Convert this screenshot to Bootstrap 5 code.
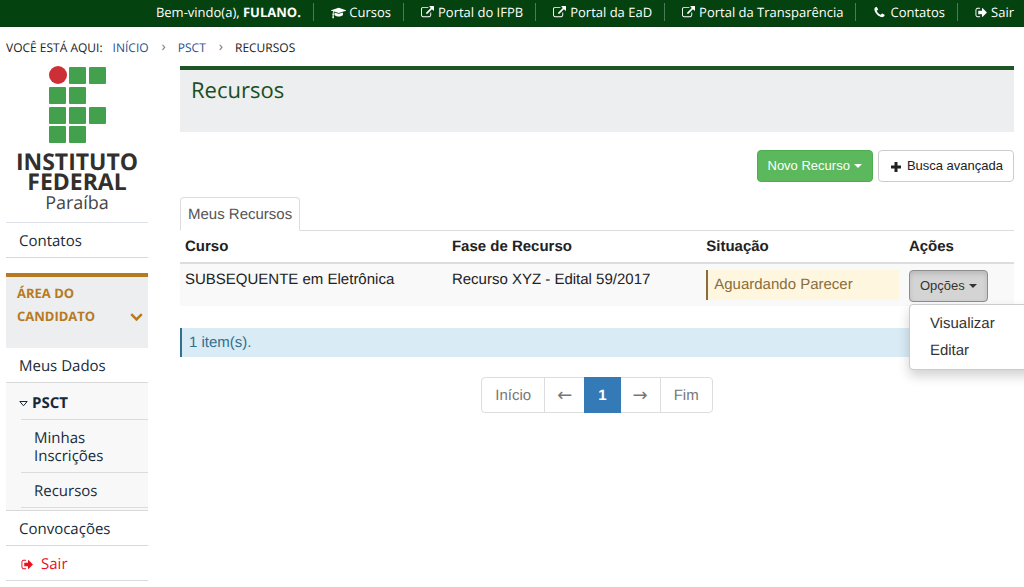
<!DOCTYPE html>
<html lang="pt-BR">
<head>
<meta charset="utf-8">
<meta name="viewport" content="width=device-width, initial-scale=1">
<title>Recursos - IFPB</title>
<link rel="stylesheet" href="https://cdn.jsdelivr.net/npm/bootstrap@5.3.0/dist/css/bootstrap.min.css">
<style>
  body { font: 15px/20px "Liberation Sans", Arial, sans-serif; color: #222; background: #fff; overflow-x: hidden; text-rendering: geometricPrecision; }
  a { text-decoration: none; }
  .top-bar, .crumbs, .brand, .side-menu, .page-title { font-family: "Open Sans", sans-serif; }
  .fa-icon { fill: currentColor; height: 13px; width: auto; vertical-align: -2px; }

  .top-bar { background: #04420f; color: #fff; min-height: 27px; font-size: 13px; padding: 3px 10px 0; border-bottom: 1px solid #0b3a14; }
  .top-bar a { color: #fff; }
  .top-bar li { line-height: 18px; height: 18px; padding: 0 12px 0 17px; }
  .top-bar li + li { border-left: 1px solid #4b7a55; }
  .top-bar li:last-child { padding-right: 0; }
  .top-bar .fa-icon { margin-right: 4px; }
  .top-bar .cap-icon { height: 12px; margin-right: 3px; }

  .crumbs { font-size: 12px; padding: 12px 6px 9px; line-height: 18px; }
  .crumbs a { color: #2c4f8f; }
  .crumbs .breadcrumb-item + .breadcrumb-item { padding-left: 13px; }
  .crumbs .breadcrumb-item + .breadcrumb-item::before { content: "›"; color: #777; padding-right: 12px; font-size: 14px; line-height: 16px; }
  .crumbs .first-crumb { padding-left: 10px; }

  .shell { padding: 0 10px 0 6px; gap: 32px; }
  .sidebar { flex: 0 0 142px; }
  .brand { color: #332f2d; padding-bottom: 8px; }
  .brand svg { width: 57px; height: 78px; }
  .brand-name { font-size: 23px; line-height: 20px; font-weight: 700; padding-top: 7px; }
  .brand-state { font-size: 18px; line-height: 22px; padding-top: 1px; color: #444; }

  .side-menu { font-size: 15px; line-height: 18px; }
  .side-menu a { display: block; color: #172938; padding: 9px 13px 7px; }
  .side-menu .entry { border-bottom: 1px solid #d9d9d9; }
  .side-menu .exit-link { color: #e8111f; padding-left: 15px; }
  .area-head { background: #eceeef; border-top: 4px solid #b57a22; color: #b87a20; font-size: 13px; line-height: 23px; font-weight: 700; margin-top: 15px; padding: 5px 5px 20px 11px; }
  .area-head svg { width: 16px; height: 10px; margin-bottom: 6px; }
  .sub-group { background: #f8f8f8; }
  .sub-group .group-link { padding: 11px 13px 7px; }
  .sub-group .sub-items { margin-left: 15px; padding-bottom: 2px; }
  .sub-group .sub-items a { border-top: 1px solid #dcdcdc; }
  .sub-group .sub-items a:last-child { border-bottom: 1px solid #dcdcdc; }

  .page-title { background: #eceeef; border-top: 4px solid #1f5526; padding: 4px 11px; min-height: 66px; }
  .page-title h1 { font-size: 22px; line-height: 32px; font-weight: 400; color: #1a4f22; margin: 0; }

  .tools { padding-top: 18px; gap: 5px; }
  .btn-tool { font-size: 13px; line-height: 20px; padding: 5px 10px; border-radius: 4px; color: #222; border: 1px solid #ccc; background: #fff; }
  .btn-search { padding-left: 12px; }
  .btn-search svg { margin-right: 6px; }
  .btn-new, .btn-new:hover { background: #5cb85c; border-color: #4cae4c; color: #fff; }
  .btn-options.show { background: #d4d4d4; border-color: #8c8c8c; color: #333; box-shadow: inset 0 3px 5px rgba(0,0,0,.12); }
  .btn-tool.dropdown-toggle::after { border-width: 4px 4px 0; margin-left: 4px; vertical-align: 2px; }

  .nav-tabs { border-color: #ddd; margin-top: 15px; }
  .nav-tabs .nav-link.active { color: #555; padding: 7px 7px 5px; border-color: #ddd #ddd #fff; border-radius: 4px 4px 0 0; }

  .grid-table { table-layout: fixed; margin-bottom: 22px; }
  .grid-table th, .grid-table td { color: #222; border-color: #ddd; }
  .grid-table thead th { border-bottom: 2px solid #ddd; padding: 6px 5px 5px; }
  .grid-table tbody td { background: #f9f9f9; border-bottom: 0; padding: 6px 5px 4px; }
  .flag-box { border-left: 2px solid #8a6d3b; background: #fff6e0; color: #8a6d3b; padding: 5px 6px; }
  .info-bar { border-left: 2px solid #31708f; background: #d9ebf5; color: #31708f; padding: 5px 7px 4px; margin-bottom: 20px; }

  .menu-options { min-width: 160px; padding: 5px 0; margin: 0; border: 1px solid #ccc; border-radius: 4px; box-shadow: 0 6px 12px rgba(0,0,0,.18); position: absolute; top: calc(100% + 2px); left: 0; font-size: 15px; }
  .menu-options .dropdown-item { padding: 4px 20px 3px; color: #333; }

  .pagination { --bs-pagination-color: #777; --bs-pagination-border-color: #ddd; --bs-pagination-active-bg: #337ab7; --bs-pagination-active-border-color: #337ab7; --bs-pagination-border-radius: 4px; }
  .pagination .page-link { font-size: 15px; line-height: 20px; padding: 8px 13px 6px; }
  .pagination .arrow-link { font-family: "DejaVu Sans", sans-serif; font-size: 18px; padding: 8px 12px 6px; }
  .pagination .active .page-link { font-weight: 700; }
</style>
</head>
<body>
<svg class="d-none" aria-hidden="true">
  <symbol id="i-external" viewBox="0 0 1792 1792"><path d="M1408 928v320q0 119-84.500 203.500t-203.500 84.500h-832q-119 0-203.500-84.500t-84.500-203.500v-832q0-119 84.500-203.500t203.500-84.500h704q14 0 23 9t9 23v64q0 14-9 23t-23 9h-704q-66 0-113 47t-47 113v832q0 66 47 113t113 47h832q66 0 113-47t47-113v-320q0-14 9-23t23-9h64q14 0 23 9t9 23zm384-864v512q0 26-19 45t-45 19-45-19l-176-176-652 652q-10 10-23 10t-23-10l-114-114q-10-10-10-23t10-23l652-652-176-176q-19-19-19-45t19-45 45-19h512q26 0 45 19t19 45z"/></symbol>
  <symbol id="i-exit" viewBox="0 0 1664 1792"><path d="M704 1440q0 4 1 20t.5 26.500-3 23.500-10 19.500-20.500 6.500h-320q-119 0-203.500-84.500t-84.500-203.500v-704q0-119 84.500-203.500t203.500-84.500h320q13 0 22.500 9.500t9.500 22.500q0 4 1 20t.5 26.500-3 23.500-10 19.500-20.500 6.500h-320q-66 0-113 47t-47 113v704q0 66 47 113t113 47h312l11.500 1 11.500 3 8 5.500 7 9 2 13.500zm928-544q0 26-19 45l-544 544q-19 19-45 19t-45-19-19-45v-288h-448q-26 0-45-19t-19-45v-384q0-26 19-45t45-19h448v-288q0-26 19-45t45-19 45 19l544 544q19 19 19 45z"/></symbol>
</svg>

<header class="top-bar d-flex justify-content-end">
  <ul class="list-unstyled d-flex flex-wrap justify-content-end mb-0">
    <li>Bem-vindo(a), <b>FULANO.</b></li>
    <li><a href="#"><svg class="fa-icon cap-icon" viewBox="0 0 2304 1792"><path d="M1774 836l18 316q4 69-82 128t-235 93.500-323 34.500-323-34.500-235-93.500-82-128l18-316 574 181q22 7 48 7t48-7zm530-324q0 23-22 31l-1120 352q-4 1-10 1t-10-1l-652-206q-43 34-71 111.500t-34 178.500q63 36 63 109 0 69-58 107l58 433q2 14-8 25-9 11-24 11h-192q-15 0-24-11-10-11-8-25l58-433q-58-38-58-107 0-73 65-111 11-207 98-330l-333-104q-22-8-22-31t22-31l1120-352q4-1 10-1t10 1l1120 352q22 8 22 31z"/></svg>Cursos</a></li>
    <li><a href="#"><svg class="fa-icon" viewBox="0 0 1792 1792"><use href="#i-external"/></svg>Portal do IFPB</a></li>
    <li><a href="#"><svg class="fa-icon" viewBox="0 0 1792 1792"><use href="#i-external"/></svg>Portal da EaD</a></li>
    <li><a href="#"><svg class="fa-icon" viewBox="0 0 1792 1792"><use href="#i-external"/></svg>Portal da Transparência</a></li>
    <li><a href="#"><svg class="fa-icon" viewBox="0 0 1792 1792"><path d="M1600 1240q0 27-10 70.500t-21 68.500q-21 50-122 106-94 51-186 51-27 0-52.500-3.500t-57.500-12.500-47.500-14.500-55.500-20.500-49-18q-98-35-175-83-128-79-264.500-215.500t-215.500-264.500q-48-77-83-175-3-9-18-49t-20.500-55.500-14.500-47.500-12.500-57.500-3.500-52.500q0-92 51-186 56-101 106-122 25-11 68.500-21t70.500-10q14 0 21 3 18 6 53 76 11 19 30 54t35 63.500 31 53.500q3 4 17.500 25t21.500 35.500 7 28.500q0 20-28.500 50t-62 55-62 53-28.500 46q0 9 5 22.500t8.500 20.500 14 24 11.500 19q76 137 174 235t235 174q2 1 19 11.500t24 14 20.500 8.500 22.500 5q18 0 46-28.500t53-62 55-62 50-28.500q14 0 28.500 7t35.500 21.500 25 17.500q25 15 53.500 31t63.500 35 54 30q70 35 76 53 3 7 3 21z"/></svg>Contatos</a></li>
    <li><a href="#"><svg class="fa-icon" viewBox="0 0 1664 1792"><use href="#i-exit"/></svg>Sair</a></li>
  </ul>
</header>

<nav class="crumbs d-flex" aria-label="Você está aqui">
  <span>VOCÊ ESTÁ AQUI:</span>
  <ol class="breadcrumb mb-0">
    <li class="breadcrumb-item first-crumb"><a href="#">INÍCIO</a></li>
    <li class="breadcrumb-item"><a href="#">PSCT</a></li>
    <li class="breadcrumb-item">RECURSOS</li>
  </ol>
</nav>

<div class="shell d-flex align-items-start">
  <aside class="sidebar">
    <div class="brand text-center">
      <svg viewBox="0 0 57 78" fill="#43a04d" class="d-block mx-auto" role="img" aria-label="Instituto Federal">
        <circle cx="9" cy="9" r="9" fill="#cd2f36"/>
        <rect x="20" y="1" width="17" height="17" rx="1"/><rect x="40" y="1" width="17" height="17" rx="1"/>
        <rect x="0" y="21" width="17" height="17" rx="1"/><rect x="20" y="21" width="17" height="17" rx="1"/>
        <rect x="0" y="41" width="17" height="17" rx="1"/><rect x="20" y="41" width="17" height="17" rx="1"/><rect x="40" y="41" width="17" height="17" rx="1"/>
        <rect x="0" y="60" width="17" height="17" rx="1"/><rect x="20" y="60" width="17" height="17" rx="1"/>
      </svg>
      <div class="brand-name">INSTITUTO<br>FEDERAL</div>
      <div class="brand-state">Paraíba</div>
    </div>
    <nav class="side-menu">
      <div class="entry border-top"><a href="#">Contatos</a></div>
      <div class="area-head d-flex justify-content-between align-items-end">
        <span>ÁREA DO CANDIDATO</span>
        <svg viewBox="0 0 16 10" fill="none" stroke="currentColor" stroke-width="3"><path d="M1.500 1.500L8 8L14.500 1.500"/></svg>
      </div>
      <div class="entry"><a href="#">Meus Dados</a></div>
      <div class="entry sub-group">
        <a href="#" class="group-link fw-bold"><svg width="9" height="6" viewBox="0 0 9 6" fill="none" stroke="currentColor" class="me-1"><path d="M.8.5H8.200L4.500 4.800z"/></svg>PSCT</a>
        <div class="sub-items">
          <a href="#">Minhas Inscrições</a>
          <a href="#">Recursos</a>
        </div>
      </div>
      <div class="entry"><a href="#">Convocações</a></div>
      <div class="entry"><a href="#" class="exit-link"><svg class="fa-icon me-2" viewBox="0 0 1664 1792"><use href="#i-exit"/></svg>Sair</a></div>
    </nav>
  </aside>

  <main class="flex-grow-1">
    <div class="page-title"><h1>Recursos</h1></div>

    <div class="tools d-flex justify-content-end">
      <button type="button" class="btn btn-tool btn-new dropdown-toggle">Novo Recurso</button>
      <button type="button" class="btn btn-tool btn-search"><svg width="10" height="10" viewBox="0 0 10 10" stroke="currentColor" stroke-width="3"><path d="M5 0V10M0 5H10"/></svg>Busca avançada</button>
    </div>

    <ul class="nav nav-tabs">
      <li class="nav-item"><a class="nav-link active" href="#">Meus Recursos</a></li>
    </ul>

    <table class="table grid-table">
      <colgroup><col style="width:32%"><col style="width:30.500%"><col style="width:24.300%"><col></colgroup>
      <thead><tr><th>Curso</th><th>Fase de Recurso</th><th>Situação</th><th>Ações</th></tr></thead>
      <tbody>
        <tr>
          <td>SUBSEQUENTE em Eletrônica</td>
          <td>Recurso XYZ - Edital 59/2017</td>
          <td><div class="flag-box">Aguardando Parecer</div></td>
          <td>
            <div class="dropdown d-inline-block">
              <button type="button" class="btn btn-tool btn-options dropdown-toggle show" data-bs-toggle="dropdown" aria-expanded="true">Opções</button>
              <ul class="dropdown-menu menu-options show">
                <li><a class="dropdown-item" href="#">Visualizar</a></li>
                <li><a class="dropdown-item" href="#">Editar</a></li>
              </ul>
            </div>
          </td>
        </tr>
      </tbody>
    </table>

    <div class="info-bar">1 item(s).</div>

    <nav aria-label="Paginação">
      <ul class="pagination justify-content-center mb-0">
        <li class="page-item"><a class="page-link" href="#">Início</a></li>
        <li class="page-item"><a class="page-link arrow-link" href="#">←</a></li>
        <li class="page-item active"><a class="page-link" href="#">1</a></li>
        <li class="page-item"><a class="page-link arrow-link" href="#">→</a></li>
        <li class="page-item"><a class="page-link" href="#">Fim</a></li>
      </ul>
    </nav>
  </main>
</div>
<script src="https://cdn.jsdelivr.net/npm/bootstrap@5.3.0/dist/js/bootstrap.bundle.min.js"></script>
</body>
</html>
